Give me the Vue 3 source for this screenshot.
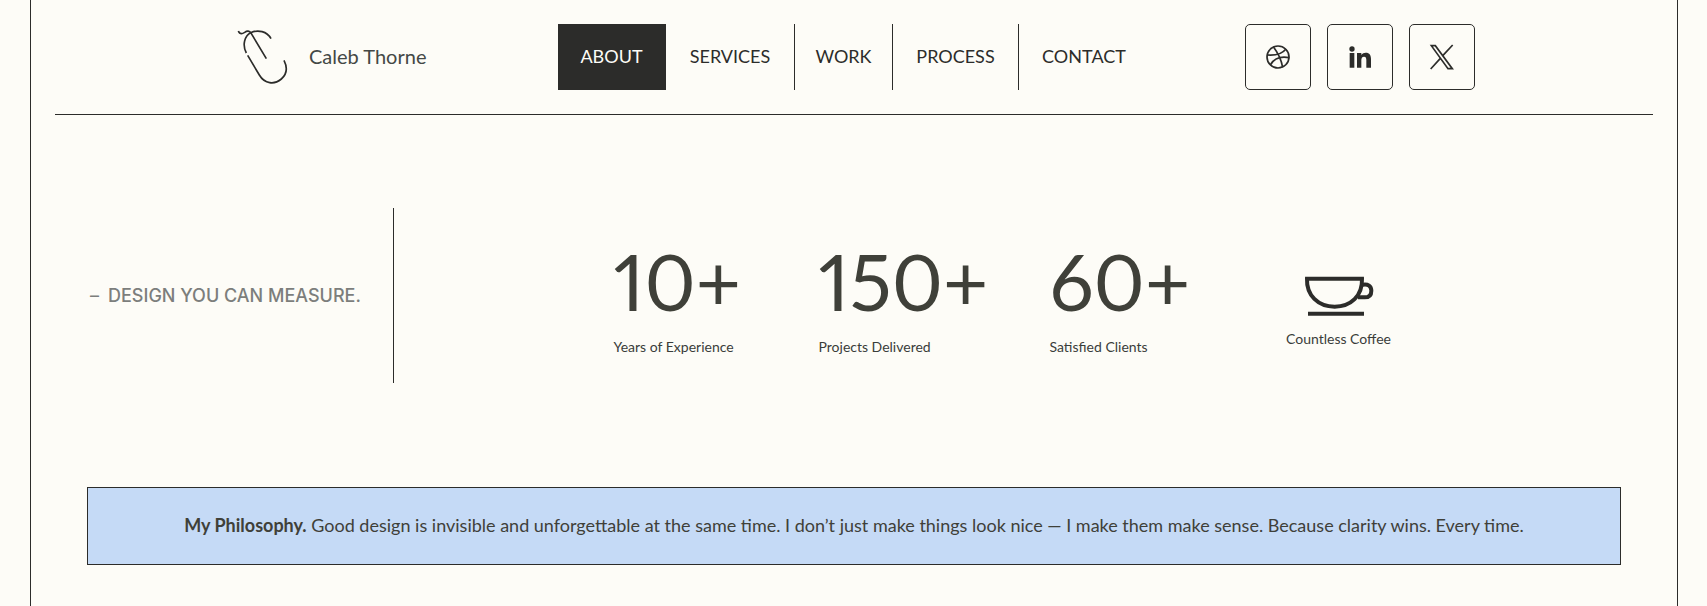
<script setup>
const links = [
  { label: 'ABOUT', href: '#about', active: true },
  { label: 'SERVICES', href: '#services' },
  { label: 'WORK', href: '#work' },
  { label: 'PROCESS', href: '#process' },
  { label: 'CONTACT', href: '#contact' },
]
const stats = [
  { value: '10+', label: 'Years of Experience' },
  { value: '150+', label: 'Projects Delivered' },
  { value: '60+', label: 'Satisfied Clients' },
]
</script>

<template>
  <div class="page">
    <div class="frame">
      <header class="header">
        <a class="brand" href="#home">
          <svg class="brand-mark" viewBox="33 27 180 198" aria-hidden="true">
            <path d="M55 48 C60 60 68 56 74 52 C81 47 88 46 94 56 L139 131" />
            <path d="M79 114 C66 90 74 62 92 53 C114 43 141 49 153 71" />
            <path d="M83 121 L118 180 C134 207 163 210 184 192 C200 178 203 158 192 136" />
          </svg>
          <span class="brand-name">Caleb Thorne</span>
        </a>
        <nav class="nav" aria-label="Main">
          <a
            v-for="link in links"
            :key="link.label"
            class="nav-link"
            :class="{ active: link.active }"
            :href="link.href"
          >{{ link.label }}</a>
        </nav>
        <div class="socials">
          <a class="social" href="#dribbble" aria-label="Dribbble">
            <svg class="dribbble" viewBox="105 102 78 78" aria-hidden="true">
              <circle cx="144" cy="141" r="33" />
              <path d="M130 110 C145 130 154 148 158 172 M111 135 C134 137 156 132 168 117 M121 165 C132 145 153 138 178 143" />
            </svg>
          </a>
          <a class="social" href="#linkedin" aria-label="LinkedIn">
            <svg class="solid" viewBox="351 102 78 78" aria-hidden="true">
              <circle cx="366" cy="117" r="8" />
              <path d="M359 129h14v44h-14zM381 129h13v6c3-5 8-7 13-7 12 0 16 8 16 20v25h-14v-22c0-6-1-11-7-11s-8 5-8 11v22h-13z" />
            </svg>
          </a>
          <a class="social" href="#x" aria-label="X">
            <svg class="xmark" viewBox="597 102 78 78" aria-hidden="true">
              <path d="M604 107h12l51 69h-13zM668 105l-29 31M631 145l-29 32" />
            </svg>
          </a>
        </div>
      </header>

      <main class="content">
        <section class="measure">
          <h2 class="heading"><span class="dash">–</span>DESIGN YOU CAN MEASURE.</h2>
          <div class="stats">
            <div v-for="stat in stats" :key="stat.label" class="stat">
              <div class="value">{{ stat.value }}</div>
              <div class="label">{{ stat.label }}</div>
            </div>
            <div class="stat coffee">
              <svg class="cup" viewBox="852 138 210 123" aria-hidden="true">
                <path d="M861 146 H1026 C1028 198 992 230 944 230 C894 230 859 196 861 146 Z" />
                <path d="M1028 164 C1044 161 1054 168 1054 182 C1054 196 1046 202 1034 202 H1014" />
                <path d="M864 251 H1032" />
              </svg>
              <div class="label">Countless Coffee</div>
            </div>
          </div>
        </section>

        <p class="philosophy">
          <strong>My Philosophy.</strong> Good design is invisible and unforgettable at the same time. I don’t just make things look nice — I make them make sense. Because clarity wins. Every time.
        </p>
      </main>
    </div>
  </div>
</template>

<style>
body {
  margin: 0;
  background: #fdfcf7;
}
</style>

<style scoped>
.page {
  box-sizing: border-box;
  min-height: 100vh;
  display: flex;
  padding: 0 29px 0 30px;
  font-family: Lato, "Open Sans", sans-serif;
  color: #2c2c2a;
}
.frame {
  flex: 1;
  padding: 0 24px;
  border-left: 1px solid #2c2c2a;
  border-right: 1px solid #2c2c2a;
}
.header {
  display: flex;
  justify-content: center;
  gap: 96px;
  padding: 24px 2px 24px 0;
  border-bottom: 1px solid #2c2c2a;
}
.brand {
  display: flex;
  align-items: center;
  gap: 18px;
  min-width: 231px;
  color: #444845;
  font-size: 20px;
  text-decoration: none;
}
.brand-name {
  padding-bottom: 2px;
}
.brand-mark {
  width: 60px;
  height: 66px;
  fill: none;
  stroke: #2c2c2a;
  stroke-width: 5;
}
.nav {
  display: grid;
  grid-template-columns: 108px 129px 98px 126px 130px;
}
.nav-link {
  display: flex;
  align-items: center;
  justify-content: center;
  padding-bottom: 2px;
  border-right: 1px solid #2c2c2a;
  color: #2c2c2a;
  font-size: 18px;
  text-decoration: none;
}
.nav-link:last-child {
  border-right: 0;
}
.nav-link.active {
  background: #2c2c2a;
  color: #fdfcf7;
}
.socials {
  display: flex;
  gap: 16px;
}
.social {
  box-sizing: border-box;
  display: flex;
  align-items: center;
  justify-content: center;
  width: 66px;
  height: 66px;
  border: 1px solid #2c2c2a;
  border-radius: 5px;
}
.social svg {
  width: 26px;
  height: 26px;
}
.dribbble,
.xmark {
  fill: none;
  stroke: #2c2c2a;
  stroke-width: 5;
}
.solid {
  fill: #2c2c2a;
}
.content {
  padding: 93px 32px 41px;
}
.measure {
  display: flex;
  min-height: 175px;
}
.heading {
  box-sizing: border-box;
  display: flex;
  align-items: center;
  flex: 0 0 307px;
  gap: 9px;
  margin: 0;
  padding-left: 3px;
  border-right: 1px solid #2c2c2a;
  color: #7c7e7c;
  font-family: Inter, sans-serif;
  font-size: 18px;
  font-weight: 500;
  white-space: nowrap;
}
.dash {
  font-weight: 400;
}
.stats {
  flex: 1;
  display: grid;
  grid-template-columns: 125px 151px 136px 146px;
  gap: 80px;
  align-items: center;
  justify-content: center;
  padding-left: 10px;
}
.stat {
  white-space: nowrap;
}
.value {
  color: #3f4039;
  font-size: 78px;
  line-height: 96px;
  font-variant-numeric: proportional-nums;
}
.label {
  margin-top: 6px;
  color: #3a3d3a;
  font-size: 14px;
  line-height: 24px;
}
.coffee {
  display: flex;
  flex-direction: column;
  align-items: center;
  gap: 4px;
  padding-top: 36px;
}
.cup {
  width: 70px;
  height: 41px;
  fill: none;
  stroke: #2c2c2a;
  stroke-width: 12;
}
.philosophy {
  margin: 104px 0 0;
  padding: 23px 24px 25px;
  border: 1px solid #2c2c2a;
  background: #c5daf6;
  color: #3f4039;
  font-size: 18px;
  line-height: 28px;
  text-align: center;
}
</style>
